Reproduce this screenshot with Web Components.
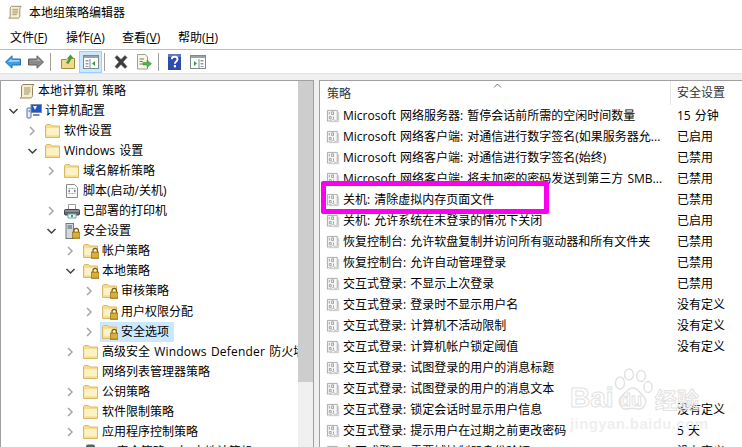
<!DOCTYPE html>
<html lang="zh">
<head>
<meta charset="utf-8">
<title>本地组策略编辑器</title>
<style>
html,body{margin:0;height:447px;overflow:hidden;background:#fff}
body{font:12px "Open Sans","Noto Sans CJK SC",sans-serif;color:#111}
</style>
</head>
<body>
<gp-app>
  <gp-titlebar slot="title">本地组策略编辑器</gp-titlebar>
  <gp-menubar slot="menu"></gp-menubar>
  <gp-toolbar slot="toolbar"></gp-toolbar>
  <gp-tree slot="tree">
    <tree-row depth="-1" icon="scroll" exp="none">本地计算机 策略</tree-row>
    <tree-row depth="0" icon="computer" exp="open">计算机配置</tree-row>
    <tree-row depth="1" icon="folder" exp="closed">软件设置</tree-row>
    <tree-row depth="1" icon="folder" exp="open">Windows 设置</tree-row>
    <tree-row depth="2" icon="folder" exp="closed">域名解析策略</tree-row>
    <tree-row depth="2" icon="script" exp="none">脚本(启动/关机)</tree-row>
    <tree-row depth="2" icon="printer" exp="closed">已部署的打印机</tree-row>
    <tree-row depth="2" icon="server" exp="open">安全设置</tree-row>
    <tree-row depth="3" icon="lockfolder" exp="closed">帐户策略</tree-row>
    <tree-row depth="3" icon="lockfolder" exp="open">本地策略</tree-row>
    <tree-row depth="4" icon="lockfolder" exp="closed">审核策略</tree-row>
    <tree-row depth="4" icon="lockfolder" exp="closed">用户权限分配</tree-row>
    <tree-row depth="4" icon="lockfolder" exp="closed" selected>安全选项</tree-row>
    <tree-row depth="3" icon="folder" exp="closed">高级安全 <span style="letter-spacing:.2px">Windows Defender</span> 防火墙</tree-row>
    <tree-row depth="3" icon="folder" exp="none">网络列表管理器策略</tree-row>
    <tree-row depth="3" icon="folder" exp="closed">公钥策略</tree-row>
    <tree-row depth="3" icon="folder" exp="closed">软件限制策略</tree-row>
    <tree-row depth="3" icon="folder" exp="closed">应用程序控制策略</tree-row>
    <tree-row depth="3" icon="ipsec" exp="closed">IP 安全策略，在 本地计算机</tree-row>
  </gp-tree>
  <gp-list slot="list">
    <list-row value="15 分钟">Microsoft 网络服务器: 暂停会话前所需的空闲时间数量</list-row>
    <list-row value="已启用">Microsoft 网络客户端: 对通信进行数字签名(如果服务器允...</list-row>
    <list-row value="已禁用">Microsoft 网络客户端: 对通信进行数字签名(始终)</list-row>
    <list-row value="已禁用">Microsoft 网络客户端: 将未加密的密码发送到第三方 SMB...</list-row>
    <list-row value="已禁用">关机: 清除虚拟内存页面文件</list-row>
    <list-row value="已启用">关机: 允许系统在未登录的情况下关闭</list-row>
    <list-row value="已禁用">恢复控制台: 允许软盘复制并访问所有驱动器和所有文件夹</list-row>
    <list-row value="已禁用">恢复控制台: 允许自动管理登录</list-row>
    <list-row value="已禁用">交互式登录: 不显示上次登录</list-row>
    <list-row value="没有定义">交互式登录: 登录时不显示用户名</list-row>
    <list-row value="没有定义">交互式登录: 计算机不活动限制</list-row>
    <list-row value="没有定义">交互式登录: 计算机帐户锁定阈值</list-row>
    <list-row value="">交互式登录: 试图登录的用户的消息标题</list-row>
    <list-row value="">交互式登录: 试图登录的用户的消息文本</list-row>
    <list-row value="没有定义">交互式登录: 锁定会话时显示用户信息</list-row>
    <list-row value="5 天">交互式登录: 提示用户在过期之前更改密码</list-row>
    <list-row value="没有定义">交互式登录: 需要域控制器身份验证</list-row>
  </gp-list>
  <mark-box slot="overlay"></mark-box>
  <baidu-mark slot="overlay"></baidu-mark>
</gp-app>

<script>
const FOLDER = `<path d="M.5 14.500V2.500l1-1h4l1.500 1.500h7.500v11.500z" fill="#f7dc8e" stroke="#d9b968"/><path d="M1.500 5h12.500v8.500H1.500z" fill="#fdf1c6"/><path d="M1.500 12.500H14v1H1.500z" fill="#f0d27f"/>`
const LOCK = `<path d="M10 9V7.600a2.200 2.200 0 0 1 4.400 0V9" fill="none" stroke="#7a5a12" stroke-width="1.200"/><rect x="8.500" y="9" width="7.500" height="6.500" fill="#c79a22" stroke="#85640f" stroke-width=".6"/><path d="M9 11h6.500M9 13h6.500" stroke="#f0d060" stroke-width=".8"/>`

const ICONS = {
  scroll: `<path d="M4 1.500h11c-1 1-1.500 2-1.500 3v8c0 1.500-1 2.500-2 2.500H1c1-.5 1.500-1 1.500-2V4C2.500 3 3 2 4 1.500z" fill="#f6eecd" stroke="#8f8667"/><path d="M5 5h6.500M5 7h6.500M5 9h6.500M5 11h5" stroke="#9b9270"/>`,
  computer: `<rect x="5" y="1.500" width="10.500" height="8" fill="#1d57c5" stroke="#7d8ba3"/><path d="M7 3l4 0-2 4z" fill="#e8f1ff"/><rect x="1" y="5" width="4" height="10" rx="1" fill="#e8edf5" stroke="#54709a"/><path d="M7 12h6.500" stroke="#7a8aa0" stroke-width="2"/><path d="M2.500 8h1.500" stroke="#1d57c5"/>`,
  folder: FOLDER,
  lockfolder: FOLDER + LOCK,
  script: `<path d="M2.500 1.500h8l3 3v10h-11z" fill="#fafafa" stroke="#8b8b8b"/><path d="M4.500 5.500h7M4.500 10.500h7" stroke="#9aa" stroke-dasharray="2 1"/><path d="M6 7l-1.500 1L6 9M10 7l1.500 1L10 9" fill="none" stroke="#667"/>`,
  printer: `<path d="M4.500 1.500h7v5h-7z" fill="#fff" stroke="#999"/><rect x="0.500" y="6.500" width="15" height="5.500" rx="1" fill="#62666b" stroke="#43474c"/><path d="M1 8h14" stroke="#b5b8bc"/><path d="M4 11h8v4H4z" fill="#eef6f8" stroke="#74a4b0"/><rect x="7" y="12" width="2" height="2" fill="#31a26b"/>`,
  server: `<rect x="2" y="0.500" width="7.500" height="15" fill="#d3d8de" stroke="#6f7a86"/><path d="M3.500 3h4.500M3.500 5h4.500" stroke="#4f5a66"/>` + LOCK,
  ipsec: `<rect x="3" y="0.500" width="9" height="8" rx="2" fill="#5a5f64"/><rect x="2" y="8" width="12" height="7" fill="#cfd3d6" stroke="#666"/>`,
  policy: `<path d="M1.500 1.500h10.500v10.500c-1 1-2 1-3 0s-2-1-3 0-2 1-3 .5l-1.500.5z" fill="#f7f7f7" stroke="#a8a8a8"/><path d="M3.500 3v3M6 3h2v3H6zM3.500 8h2v2.500h-2zM8 8v2.500" fill="none" stroke="#9e9e9e"/><path d="M13.500 3.500v10H3.500" fill="none" stroke="#c4c4c4"/>`
}

class GpIcon extends HTMLElement {
  connectedCallback() {
    const size = this.getAttribute('size') || 16
    const shadow = this.attachShadow({ mode: 'open' })
    shadow.innerHTML = `<style>:host{display:block;width:${size}px;height:${size}px}svg{display:block}</style>
      <svg width="${size}" height="${size}" viewBox="0 0 16 16">${ICONS[this.getAttribute('name')] || ''}</svg>`
  }
}

const appTemplate = document.createElement('template')
appTemplate.innerHTML = `
  <style>
  :host{display:flex;flex-direction:column;position:relative;width:742px;height:447px;overflow:hidden;
    font:12px "Open Sans","Noto Sans CJK SC",sans-serif;color:#000;word-spacing:1px}
  .band{height:7px;background:#f0f0f0;flex:none;border-top:1px solid #e3e3e3;box-sizing:border-box}
  .panes{flex:1;min-height:0;display:flex;background:#f0f0f0}
  .left{width:314px;flex:none;border:1px solid #a0a0a0;border-width:1px 1px 0 1px;box-sizing:border-box;background:#fff;overflow:hidden}
  .right{flex:1;min-width:0;margin-left:5px;border:1px solid #a0a0a0;border-width:1px 0 0 1px;box-sizing:border-box;background:#fff;overflow:hidden}
  </style>
  <slot name="title"></slot>
  <slot name="menu"></slot>
  <slot name="toolbar"></slot>
  <div class="band"></div>
  <div class="panes">
    <div class="left"><slot name="tree"></slot></div>
    <div class="right"><slot name="list"></slot></div>
  </div>
  <slot name="overlay"></slot>
`
class GpApp extends HTMLElement {
  constructor() {
    super()
    this.attachShadow({ mode: 'open' }).append(appTemplate.content.cloneNode(true))
  }
}

const titleTemplate = document.createElement('template')
titleTemplate.innerHTML = `
  <style>
  :host{display:flex;align-items:center;gap:7px;height:23px;padding-left:8px;flex:none}
  </style>
  <gp-icon name="scroll" size="14"></gp-icon>
  <span><slot></slot></span>
`
class GpTitlebar extends HTMLElement {
  constructor() {
    super()
    this.attachShadow({ mode: 'open' }).append(titleTemplate.content.cloneNode(true))
  }
}

class GpMenubar extends HTMLElement {
  constructor() {
    super()
    const items = [['文件', 'F'], ['操作', 'A'], ['查看', 'V'], ['帮助', 'H']]
    this.attachShadow({ mode: 'open' }).innerHTML = `
      <style>
      :host{display:flex;height:26px;align-items:center;padding:2px 0 0 1px;box-sizing:border-box;flex:none}
      span{padding:0 9px;width:38px;white-space:nowrap}
      span:first-child{width:36px}
      u{text-underline-offset:1px}
      </style>
      ${items.map(([t, k]) => `<span>${t}(<u>${k}</u>)</span>`).join('')}`
  }
}

const toolbarTemplate = document.createElement('template')
toolbarTemplate.innerHTML = `
  <style>
  :host{display:flex;align-items:center;height:23px;flex:none;border-top:1px solid #bdbdbd;padding-left:5px}
  svg{display:block;flex:none}
  .sep{width:1px;height:18px;background:#a0a0a0;flex:none}
  .on{background:#cce8ff;border:1px solid #99d1ff;height:20px;width:21px;display:flex;align-items:center;justify-content:center;flex:none}
  </style>
  <svg width="16" height="14" viewBox="0 0 16 14" style="margin-right:7px"><path d="M.5 7 7 .8V4h8.500v6H7v3.200z" fill="#3b9fe8" stroke="#1f6fb8"/><path d="M3 7 6.500 3.500V5h8v1.500z" fill="#a5d8fa"/></svg>
  <svg width="16" height="14" viewBox="0 0 16 14" style="margin-right:6px"><path d="M15.500 7 9 .8V4H.5v6H9v3.200z" fill="#8a8a8a" stroke="#5f5f5f"/><path d="M1.500 5h8V3l3 3z" fill="#b5b5b5"/></svg>
  <div class="sep"></div>
  <svg width="16" height="16" viewBox="0 0 16 16" style="margin:0 3px 0 9px"><path d="M1.500 5.500h5l1-1h7v10h-13z" fill="#f3d98e" stroke="#a88a3c"/><path d="M6 9 9 4 7.500 4l3-3.500 3 3.500H12L8.500 10z" fill="#3aa335"/></svg>
  <div class="on"><svg width="16" height="14" viewBox="0 0 16 14"><rect x=".5" y=".5" width="15" height="13" fill="#fff" stroke="#7f8a8f"/><path d="M1 1h14v2H1z" fill="#9aa3a8"/><path d="M2.500 5h3v1.500h-3zM2.500 8h3v1.500h-3zM2.500 11h3v1h-3z" fill="#8aa0a8"/><path d="M7 4v9" stroke="#7f8a8f"/><path d="M12 6v5L9 8.500z" fill="#29a02f"/></svg></div>
  <div class="sep" style="margin-left:2px"></div>
  <svg width="16" height="16" viewBox="0 0 16 16" style="margin:0 7px 0 8px"><path d="M2 3.500 4 1.500l4 4 4-4 2 2-4 4.500 4 4.500-2 2-4-4-4 4-2-2 4-4.500z" fill="#3c3c3c" stroke="#555" stroke-width=".5"/></svg>
  <svg width="16" height="16" viewBox="0 0 16 16" style="margin-right:6px"><path d="M1.500 .5h8l2 2.500v12h-10z" fill="#f8f6e8" stroke="#a3a08c"/><path d="M3.500 5H8M3.500 7.500H7M3.500 10H7" stroke="#7d7a68"/><path d="M7 8.500h4V6l4.500 3.800-4.500 3.700V11H7z" fill="#48b648" stroke="#2c8a2c" stroke-width=".5"/></svg>
  <div class="sep"></div>
  <svg width="13" height="16" viewBox="0 0 13 16" style="margin:0 9px 0 9px"><rect width="13" height="16" fill="#2f4aa8"/><rect x="0" y="0" width="13" height="3" fill="#5d78c8"/><path d="M3.800 5.200C3.800 2 9.500 2 9.500 5.200c0 2.300-2.600 2.300-2.600 4.600" fill="none" stroke="#fff" stroke-width="1.900"/><rect x="5.800" y="11" width="2.200" height="2.400" fill="#fff"/></svg>
  <svg width="16" height="14" viewBox="0 0 16 14"><rect x=".5" y=".5" width="15" height="13" fill="#fff" stroke="#7f8a8f"/><path d="M1 1h14v2H1z" fill="#9aa3a8"/><path d="M10.500 5h3v1.500h-3zM10.500 8h3v1.500h-3zM10.500 11h3v1h-3z" fill="#8aa0a8"/><path d="M9 4v9" stroke="#7f8a8f"/><path d="M4 6v5l3-2.500z" fill="#29a02f"/></svg>
`
class GpToolbar extends HTMLElement {
  constructor() {
    super()
    this.attachShadow({ mode: 'open' }).append(toolbarTemplate.content.cloneNode(true))
  }
}

const treeTemplate = document.createElement('template')
treeTemplate.innerHTML = `
  <style>
  :host{display:flex;height:368px;overflow:hidden}
  .rows{flex:1;min-width:0;overflow:hidden}
  .bar{width:15px;flex:none;background:#f0f0f0}
  .thumb{height:301px;background:#cdcdcd}
  </style>
  <div class="rows"><slot></slot></div>
  <div class="bar"><div class="thumb"></div></div>
`
class GpTree extends HTMLElement {
  constructor() {
    super()
    this.attachShadow({ mode: 'open' }).append(treeTemplate.content.cloneNode(true))
  }
}

class TreeRow extends HTMLElement {
  connectedCallback() {
    const depth = +this.getAttribute('depth')
    const exp = this.getAttribute('exp')
    const open = `<polyline points="1.500,3 5.500,7 9.500,3" fill="none" stroke="#404040" stroke-width="1.500"/>`
    const closed = `<polyline points="3,1 7,5 3,9" fill="none" stroke="#a6a6a6" stroke-width="1.500"/>`
    const glyph = exp === 'open' ? open : exp === 'closed' ? closed : ''
    const sel = this.hasAttribute('selected')
    this.attachShadow({ mode: 'open' }).innerHTML = `
      <style>
      :host{display:flex;align-items:center;height:20.06px;white-space:nowrap;padding-left:${depth * 19 + 7}px}
      .exp{width:11px;height:10px;flex:none;margin-right:5px}
      .item{display:flex;align-items:center;height:100%;padding:0 5px 0 2px;gap:3px;flex:none}
      .item.sel{background:#cce8ff}
      .item span{padding-bottom:2px}
      svg{display:block}
      </style>
      <svg class="exp" viewBox="0 0 11 10">${glyph}</svg>
      <div class="item${sel ? ' sel' : ''}"><gp-icon name="${this.getAttribute('icon')}"></gp-icon><span><slot></slot></span></div>`
  }
}

const listTemplate = document.createElement('template')
listTemplate.innerHTML = `
  <style>
  :host{display:block;position:relative}
  header{display:grid;grid-template-columns:350px 1fr;height:24.5px;align-items:center;color:#333}
  .h1{padding-left:7px;position:relative}
  .h2{padding-left:6px;border-left:1px solid #e5e5e5;height:24px;line-height:24px}
  svg{position:absolute;left:173px;top:-1px}
  </style>
  <header>
    <div class="h1">策略<svg width="9" height="5" viewBox="0 0 9 5"><polyline points="1,4.500 4.500,1 8,4.500" fill="none" stroke="#777"/></svg></div>
    <div class="h2">安全设置</div>
  </header>
  <slot></slot>
`
class GpList extends HTMLElement {
  constructor() {
    super()
    this.attachShadow({ mode: 'open' }).append(listTemplate.content.cloneNode(true))
  }
}

class ListRow extends HTMLElement {
  connectedCallback() {
    this.attachShadow({ mode: 'open' }).innerHTML = `
      <style>
      :host{display:grid;grid-template-columns:350px 1fr;height:21px;align-items:center;white-space:nowrap}
      .name{display:flex;align-items:center;gap:2px;padding-left:6px;overflow:hidden}
      .name span,.val{padding-bottom:2px}
      .val{padding-left:7px}
      </style>
      <div class="name"><gp-icon name="policy" size="15"></gp-icon><span><slot></slot></span></div>
      <div class="val">${this.getAttribute('value')}</div>`
  }
}

class MarkBox extends HTMLElement {
  constructor() {
    super()
    this.attachShadow({ mode: 'open' }).innerHTML = `
      <style>
      :host{display:block;position:absolute;left:321px;top:181px;width:228px;height:33px;box-sizing:border-box;
        border:5px solid #fb00f0;border-radius:2px}
      </style>`
  }
}

const markTemplate = document.createElement('template')
markTemplate.innerHTML = `
  <style>
  :host{display:block;position:absolute;left:568px;top:366px;width:140px;height:66px;pointer-events:none;word-spacing:0}
  svg{position:absolute;left:45px;top:2px}
  .big{position:absolute;left:2px;top:16px;font:bold 28px/32px "Liberation Sans",sans-serif;color:transparent;-webkit-text-stroke:1px #e2e2e2}
  .du{position:absolute;left:52px;top:24px;font:bold 18px/20px "Liberation Sans",sans-serif;color:transparent;-webkit-text-stroke:1px #e2e2e2}
  .cn{position:absolute;left:87px;top:18px;font:bold 22px/28px "Noto Sans CJK SC",sans-serif;color:transparent;-webkit-text-stroke:1px #e2e2e2}
  .url{position:absolute;left:2px;top:49px;font:bold 15px/17px "Liberation Sans",sans-serif;letter-spacing:.4px;color:#efefef}
  </style>
  <svg width="40" height="44" viewBox="0 0 40 44" fill="none" stroke="#e2e2e2" stroke-width="1.500">
    <ellipse cx="7" cy="15" rx="4.500" ry="6"/><ellipse cx="16" cy="6.500" rx="4.500" ry="5.500"/><ellipse cx="28" cy="8" rx="4.500" ry="5.500"/><ellipse cx="35" cy="19" rx="4" ry="5.500"/>
    <path d="M20 20c5 0 7 5 11 9 4 5 0 13-6 12-4-1-7-1-11 0-6 1-10-7-6-12 4-3 6-9 12-9z"/>
  </svg>
  <span class="big">Bai</span>
  <span class="du">du</span>
  <span class="cn">经验</span>
  <span class="url">jingyan.baidu.com</span>
`
class BaiduMark extends HTMLElement {
  constructor() {
    super()
    this.attachShadow({ mode: 'open' }).append(markTemplate.content.cloneNode(true))
  }
}

customElements.define('gp-icon', GpIcon)
customElements.define('gp-app', GpApp)
customElements.define('gp-titlebar', GpTitlebar)
customElements.define('gp-menubar', GpMenubar)
customElements.define('gp-toolbar', GpToolbar)
customElements.define('gp-tree', GpTree)
customElements.define('tree-row', TreeRow)
customElements.define('gp-list', GpList)
customElements.define('list-row', ListRow)
customElements.define('mark-box', MarkBox)
customElements.define('baidu-mark', BaiduMark)
</script>
</body>
</html>
